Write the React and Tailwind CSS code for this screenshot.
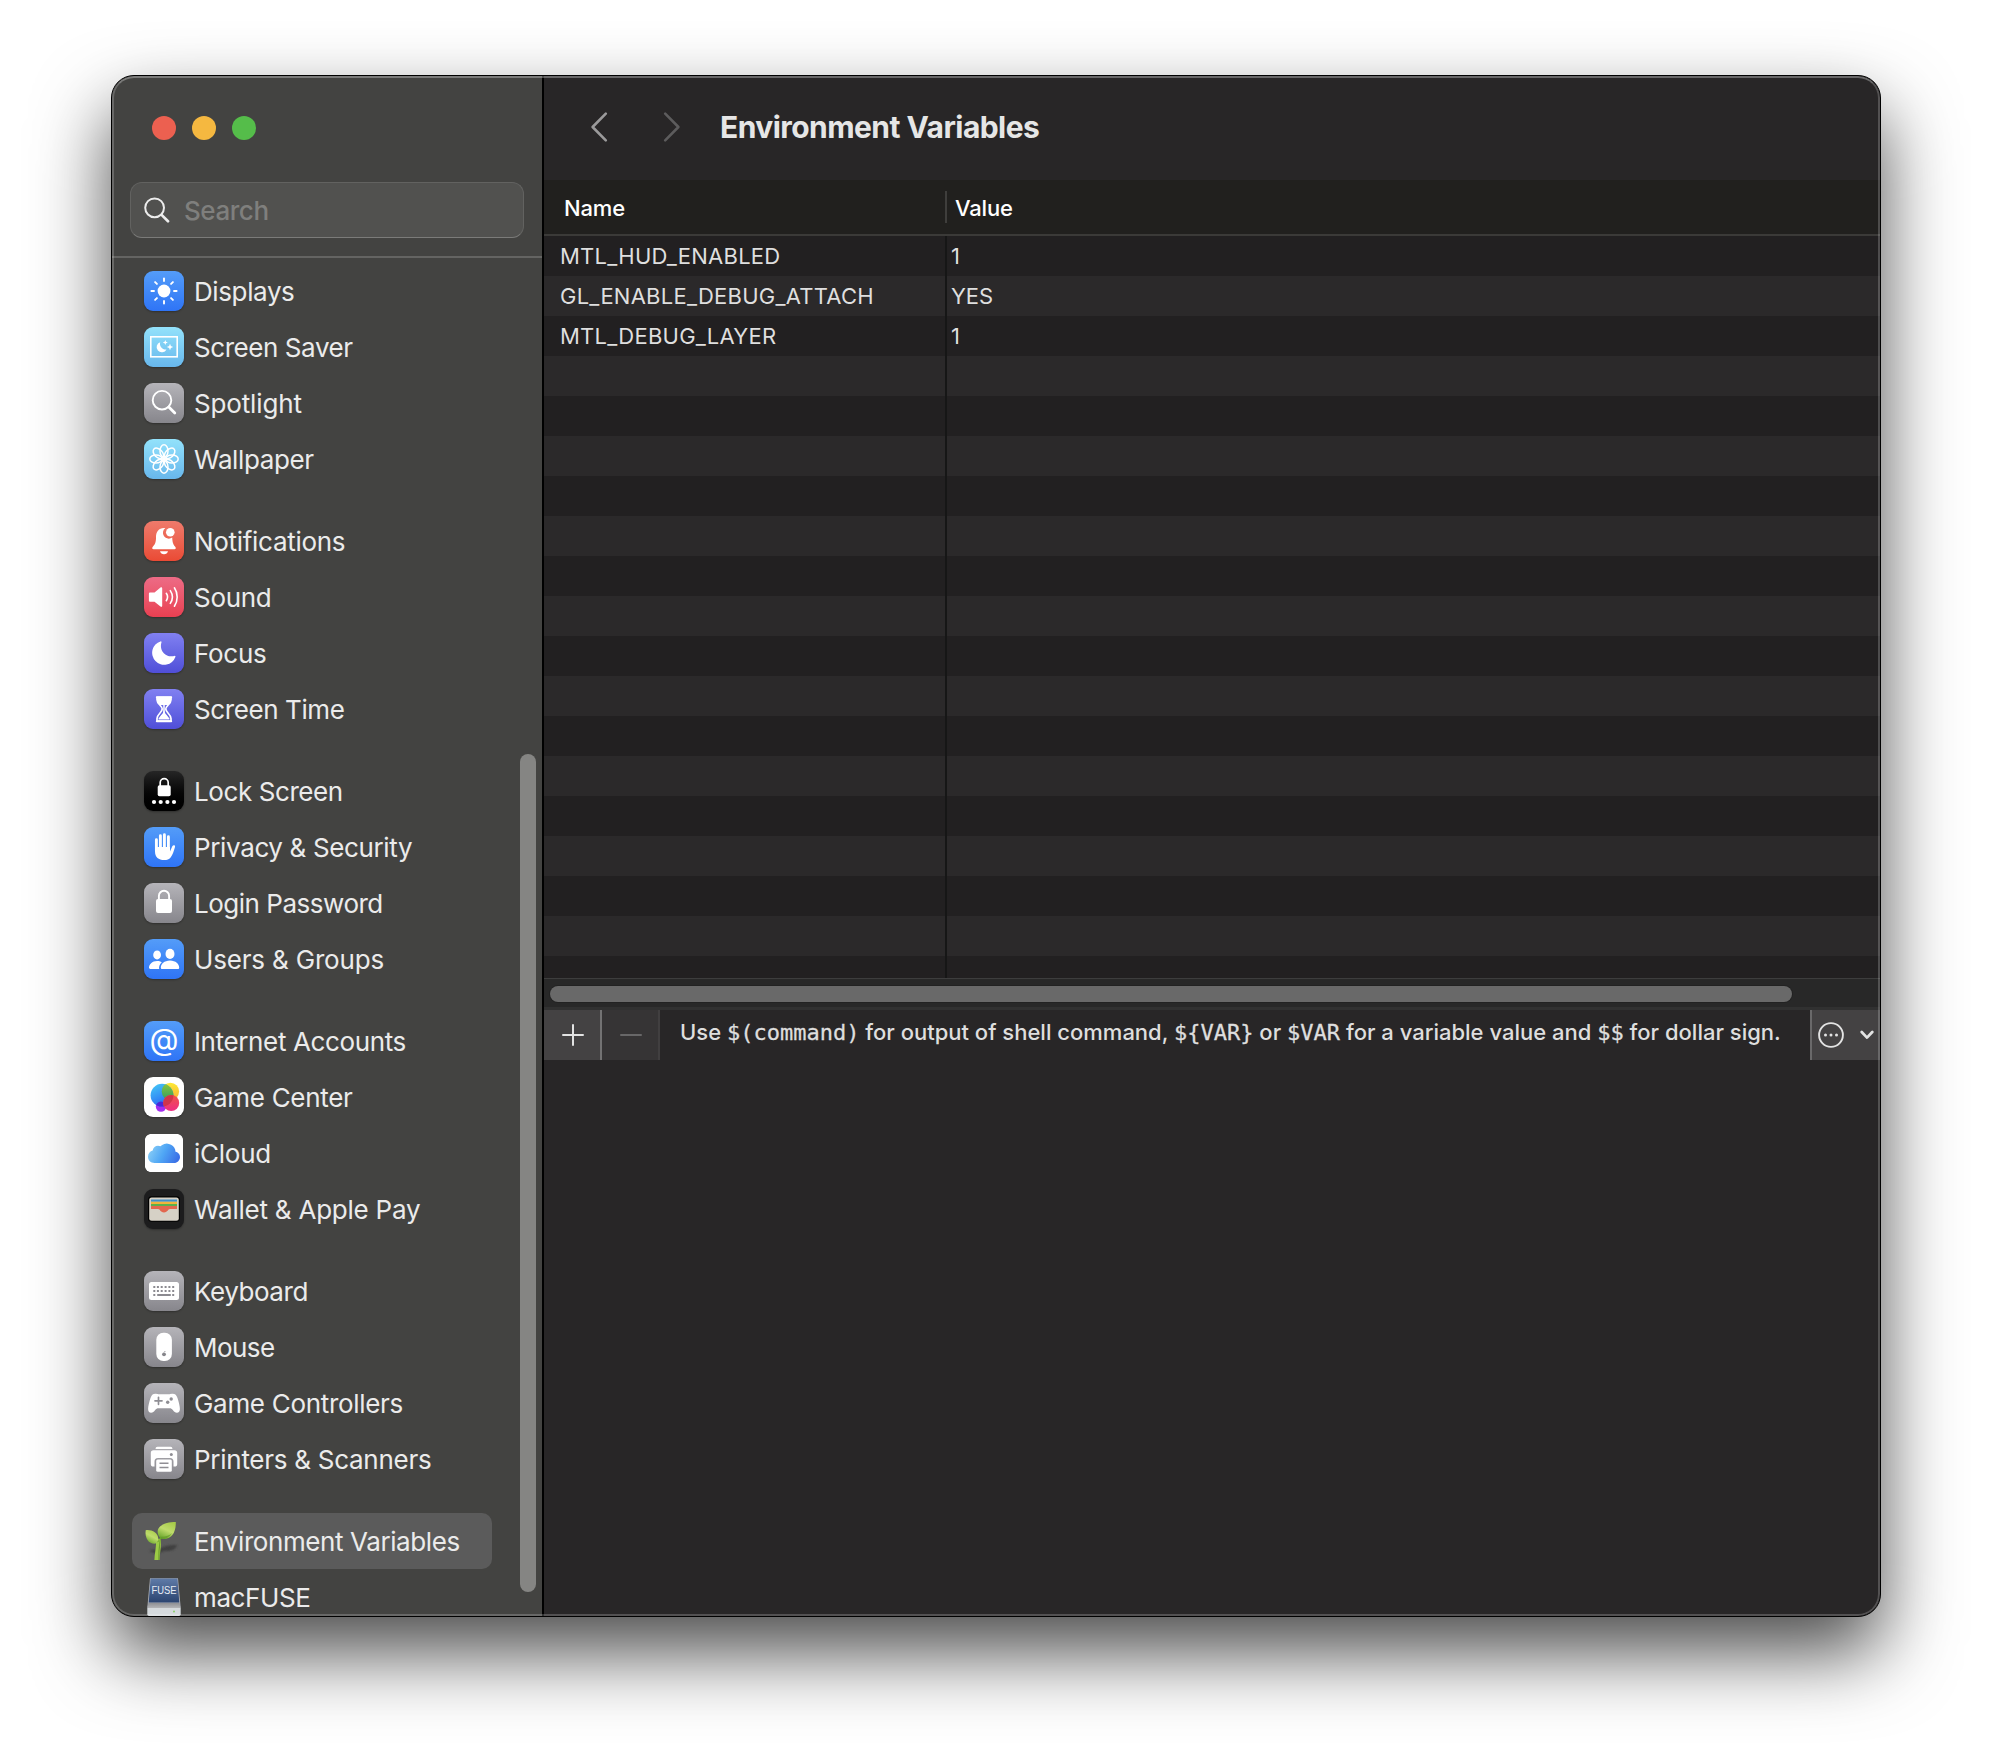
const GRADIENTS = {
  blue: "bg-linear-to-b from-[#549cf8] to-[#2f74f6]",
  sky: "bg-linear-to-b from-[#93e2fb] to-[#68b7ec]",
  gray: "bg-linear-to-b from-[#b5b4b9] to-[#87868c]",
  red: "bg-linear-to-b from-[#ee7a6b] to-[#ea4a34]",
  pink: "bg-linear-to-b from-[#ed6b86] to-[#e93f51]",
  indigo: "bg-linear-to-b from-[#8180f1] to-[#504ed8]",
  black: "bg-linear-to-b from-[#262626] to-[#000000]",
  white: "bg-white",
  dark: "bg-[#1c1c1d]",
  none: "",
};

function Svg({ children }) {
  return (
    <svg viewBox="0 0 40 40" className="block size-10" fill="none">
      {children}
    </svg>
  );
}

const EIGHTHS = [0, 45, 90, 135, 180, 225, 270, 315];

const Displays = () => (
  <Svg>
    <circle cx="20" cy="20" r="6.4" fill="#fff" />
    {EIGHTHS.map((a) => (
      <path key={a} d="M20 10V7.4" stroke="#fff" strokeWidth="1.9" strokeLinecap="round" transform={`rotate(${a} 20 20)`} />
    ))}
  </Svg>
);

const ScreenSaver = () => (
  <Svg>
    <rect x="6.8" y="9.8" width="26.4" height="20" stroke="#fff" strokeWidth="1.6" />
    <path d="M16.2 15.2a5.2 5.2 0 1 0 6.3 7.2 5.6 5.6 0 0 1-6.3-7.2Z" fill="#fff" />
    <path d="M21.3 13l.7 1.8 1.8.7-1.8.7-.7 1.8-.7-1.8-1.8-.7 1.8-.7ZM26 16.8l.9 2.3 2.3.9-2.3.9-.9 2.3-.9-2.3-2.3-.9 2.3-.9Z" fill="#fff" />
  </Svg>
);

const Spotlight = () => (
  <Svg>
    <circle cx="18" cy="17.2" r="9.3" stroke="#fff" strokeWidth="1.9" />
    <path d="M24.8 24l6 6" stroke="#fff" strokeWidth="2.8" strokeLinecap="round" />
  </Svg>
);

const Wallpaper = () => (
  <Svg>
    {EIGHTHS.map((a) => (
      <ellipse key={a} cx="20" cy="12" rx="4" ry="6.2" stroke="#fff" strokeWidth="1.5" transform={`rotate(${a} 20 20)`} />
    ))}
    <circle cx="20" cy="20" r="1.6" fill="#fff" />
  </Svg>
);

const Bell = () => (
  <Svg>
    <path d="M20 7c-5.4 0-8 4-8 9 0 5.5-.9 7.3-3.2 9.7-.9.9-.8 2.6.8 2.6h20.8c1.6 0 1.7-1.7.8-2.6-1.8-1.9-2.8-4-3-9.2A5.7 5.7 0 0 1 21.3 7.1Z" fill="#fff" />
    <circle cx="26.3" cy="11.2" r="4.3" fill="#fff" />
    <path d="M16 30.2h8c-.5 1.9-2 3-4 3s-3.5-1.1-4-3Z" fill="#fff" />
  </Svg>
);

const Sound = () => (
  <Svg>
    <path d="M6.2 15.5h4.3l6-4.9c.8-.6 1.7-.2 1.7.8v17.4c0 1-.9 1.4-1.7.8l-6-4.9H6.2c-.8 0-1.3-.5-1.3-1.3v-6.6c0-.8.5-1.3 1.3-1.3Z" fill="#fff" />
    <path d="M22.3 16.3c1.5 2.2 1.5 5.2 0 7.4M26.3 13.6c2.6 3.9 2.6 8.9 0 12.8M30.4 10.8c3.7 5.5 3.7 12.9 0 18.4" stroke="#fff" strokeWidth="1.6" strokeLinecap="round" />
  </Svg>
);

const Focus = () => (
  <Svg>
    <path d="M16.5 8.4c.6-.3 1.2.2 1 .9-2.7 8.3 4.2 16 12.9 13.6.8-.2 1.3.4 1 1.1A12 12 0 1 1 16.5 8.4Z" fill="#fff" />
  </Svg>
);

const Hourglass = () => (
  <Svg>
    <path d="M13 8.3h14v2.4c0 4.3-5.2 6-5.2 9.4s5.2 5.1 5.2 9.4v2.7H13v-2.7c0-4.3 5.2-6 5.2-9.4s-5.2-5.1-5.2-9.4Z" stroke="#fff" strokeWidth="1.7" strokeLinejoin="round" />
    <path d="M13 8.3h14v2.9c-.5 2.2-1.7 3.4-3 4.7h-8c-1.3-1.3-2.5-2.5-3-4.7ZM20 21c1 4 2.5 4.5 5.500 8.500v1h-11v-1c3-4 4.500-4.500 5.500-8.500Z" fill="#fff" />
    <path d="M20 16v8" stroke="#fff" strokeWidth="1.5" />
    <path d="M12.8 8.2h14.400M12.8 32.200h14.400" stroke="#fff" strokeWidth="2" strokeLinecap="round" />
  </Svg>
);

const LockScreen = () => (
  <Svg>
    <rect x="13.7" y="14.3" width="13" height="11" rx="1.8" fill="#fff" />
    <path d="M16.2 15v-3.4a4 4 0 0 1 8 0V15" stroke="#fff" strokeWidth="1.7" />
    {[10, 16.7, 23.4, 30].map((x) => (
      <circle key={x} cx={x} cy="31" r="2.1" fill="#fff" />
    ))}
  </Svg>
);

const Hand = () => (
  <Svg>
    <path d="M13 13v11M17 9v13M21 8v13M25 10v13" stroke="#fff" strokeWidth="2.9" strokeLinecap="round" transform="translate(-.6 -.3)" />
    <path d="M11 20h15v4.5l2.3-5.2c.8-1.8 3.4-1.4 2.7.8-1.5 4.5-2.2 7.8-4.4 10.4-1.5 1.8-3.6 2.6-6.3 2.6-5.8 0-9.3-3-9.3-8.6Z" fill="#fff" />
  </Svg>
);

const Padlock = () => (
  <Svg>
    <rect x="12" y="16" width="16" height="14" rx="2" fill="#fff" />
    <path d="M14.9 17v-4.1a5.1 5.1 0 0 1 10.2 0V17" stroke="#fff" strokeWidth="1.9" />
  </Svg>
);

const Users = () => (
  <Svg>
    <ellipse cx="13.1" cy="15.9" rx="3.9" ry="4.5" fill="#fff" />
    <path d="M17.8 23.2C16.5 22.4 15 22 13.1 22 8 22 5 25.5 5 28.600c0 .9.5 1.400 1.400 1.400h8.800c-.6-2.200.6-4.900 2.600-6.800Z" fill="#fff" />
    <ellipse cx="26" cy="14.9" rx="4.5" ry="5.1" fill="#fff" />
    <path d="M26 21.6c-5.8 0-9.2 3.800-9.200 6.900 0 1 .5 1.500 1.500 1.500h15.400c1 0 1.500-.5 1.500-1.500 0-3.100-3.400-6.900-9.200-6.900Z" fill="#fff" />
  </Svg>
);

const At = () => (
  <span className="flex size-10 items-center justify-center pb-1 text-[30px] leading-none text-white">@</span>
);

const GameCenter = () => (
  <Svg>
    <defs>
      <linearGradient id="gcBlue" x1="0" y1="0" x2=".5" y2="1">
        <stop offset="0" stopColor="#46cdf6" />
        <stop offset="1" stopColor="#2968f5" />
      </linearGradient>
      <linearGradient id="gcYellow" x1="0" y1="0" x2="0" y2="1">
        <stop offset="0" stopColor="#fdea35" />
        <stop offset="1" stopColor="#f7ad33" />
      </linearGradient>
      <linearGradient id="gcPink" x1="0" y1="0" x2="0" y2="1">
        <stop offset="0" stopColor="#ef5348" />
        <stop offset="1" stopColor="#ee2d83" />
      </linearGradient>
      <linearGradient id="gcGreen" x1="0" y1="0" x2="0" y2="1">
        <stop offset="0" stopColor="#8fc63c" />
        <stop offset="1" stopColor="#2f9e62" />
      </linearGradient>
      <clipPath id="gcClip">
        <circle cx="18" cy="18.2" r="11.4" />
      </clipPath>
    </defs>
    <circle cx="17" cy="29.6" r="5.2" fill="#a32df0" />
    <circle cx="26.4" cy="14.5" r="8.7" fill="url(#gcYellow)" />
    <circle cx="18" cy="18.2" r="11.4" fill="url(#gcBlue)" />
    <g clipPath="url(#gcClip)">
      <circle cx="26.4" cy="14.5" r="8.7" fill="url(#gcGreen)" />
      <circle cx="17" cy="29.6" r="5.2" fill="#4a28d8" />
    </g>
    <circle cx="27.2" cy="26" r="8" fill="url(#gcPink)" />
    <g clipPath="url(#gcClip)">
      <circle cx="27.2" cy="26" r="8" fill="#d0344a" />
    </g>
  </Svg>
);

const ICloud = () => (
  <Svg>
    <defs>
      <linearGradient id="cloud" x1="0" y1=".3" x2="1" y2=".6">
        <stop offset="0" stopColor="#8bcff6" />
        <stop offset=".5" stopColor="#4fa6f5" />
        <stop offset="1" stopColor="#3a6fe6" />
      </linearGradient>
    </defs>
    <rect x="1" y="1" width="38" height="38" rx="5.5" fill="#fff" />
    <path d="M10.5 30C6.7 30 4 27.3 4 23.8c0-3.1 2-5.6 4.7-6.3.4-2.9 2.7-4.8 5.3-4.8.9 0 1.7.2 2.4.6A8.900 8.900 0 0 1 31.300 17v1.400c2.700.5 4.700 2.800 4.700 5.600 0 3.300-2.600 6-6 6Z" fill="url(#cloud)" />
  </Svg>
);

const Wallet = () => (
  <Svg>
    <rect x="4" y="7.3" width="32" height="25.5" rx="3.5" fill="#000" />
    <rect x="5.2" y="8.5" width="29.6" height="23.2" rx="2.5" fill="#d6d1c6" />
    <path d="M7 10.5h26v2.2H7Z" fill="#3f8fc9" />
    <path d="M7 12.7h26v2.2H7Z" fill="#f0b43c" />
    <path d="M7 14.9h26v2.2H7Z" fill="#5bb04c" />
    <path d="M7 17.1h26v3h-7.200c-1.800 0-2 3.400-5.800 3.400s-4-3.400-5.800-3.400H7Z" fill="#e2674f" />
  </Svg>
);

const Keyboard = () => (
  <Svg>
    <rect x="5" y="11" width="30" height="18" rx="2.5" fill="#fff" />
    {[10.3, 13.9, 17.7, 21.6, 25.4, 29.2].map((x) => (
      <path key={x} d={`M${x} 15v2M${x} 19v2`} stroke="#8b8a90" strokeWidth="2" />
    ))}
    <path d="M9.3 24h2M13.2 24h13.6M28.2 24h2" stroke="#8b8a90" strokeWidth="2" />
  </Svg>
);

const Mouse = () => (
  <Svg>
    <rect x="12.3" y="5.7" width="15.6" height="28.3" rx="7" fill="#fff" />
    <circle cx="20" cy="27.3" r="1.9" fill="#86858b" />
    <path d="M20.2 25.2l1-1" stroke="#86858b" strokeWidth="1" />
  </Svg>
);

const Controller = () => (
  <Svg>
    <path d="M11.5 10.8c-2.9 0-4 1.4-5 4.3-1.3 3.9-2.4 8.3-2.4 11 0 2.3 1.1 3.7 3 3.7 1.7 0 2.7-1 4.1-2.7.9-1.2 1.8-1.8 3.4-1.8h10.800c1.600 0 2.500.6 3.400 1.800 1.400 1.700 2.400 2.700 4.100 2.700 1.900 0 3-1.400 3-3.700 0-2.700-1.100-7.100-2.400-11-1-2.900-2.100-4.300-5-4.300-1.200 0-1.800.4-2.800.4H14.300c-1 0-1.600-.4-2.800-.4Z" fill="#fff" />
    <path d="M14.5 14.3v7M11 17.8h7" stroke="#8f8e94" strokeWidth="1.7" strokeLinecap="round" />
    <circle cx="27.2" cy="16" r="1.7" fill="#8f8e94" />
    <circle cx="23.7" cy="19.3" r="1.7" fill="#8f8e94" />
  </Svg>
);

const Printer = () => (
  <Svg>
    <path d="M13.5 7.7h13c1.3 0 1.9.8 1.9 2.2H11.6c0-1.4.6-2.2 1.9-2.2Z" fill="#fff" />
    <path d="M9.5 11.3h21c1.7 0 2.7 1 2.7 2.8v10.8c0 1.8-.9 2.7-2.7 2.7h-1v-5.1c0-2.3-1.1-3.5-3.5-3.5H14c-2.4 0-3.5 1.2-3.5 3.5v5.1h-1c-1.8 0-2.7-.9-2.7-2.7V14.1c0-1.8 1-2.8 2.7-2.8Z" fill="#fff" />
    <circle cx="27.3" cy="15.5" r="1.5" fill="#8f8e94" />
    <rect x="12.2" y="20.4" width="15.6" height="12.4" rx="1.5" fill="#fff" />
    <path d="M15.5 24.3h9M15.5 28.6h9" stroke="#8f8e94" strokeWidth="1.5" />
  </Svg>
);

const Sprout = () => (
  <Svg>
    <defs>
      <linearGradient id="leaf" x1=".8" y1="0" x2=".3" y2="1">
        <stop offset="0" stopColor="#a6ca48" />
        <stop offset=".5" stopColor="#bfdc6c" />
        <stop offset="1" stopColor="#6aa62c" />
      </linearGradient>
      <filter id="soft" x="-30%" y="-60%" width="160%" height="220%">
        <feGaussianBlur stdDeviation="1" />
      </filter>
    </defs>
    <path d="M5 30c4-2 9-1 12-3 3-2 9-3.5 16-3-1 5-7 6.5-13 6-3 2-9 3-15 0Z" fill="#3f3f3f" filter="url(#soft)" />
    <path d="M14.2 18c1.3 6-.9 12-1.3 21" stroke="#9ccb45" strokeWidth="5" />
    <path d="M16.5 17c-1 7-2 12-1.6 22" stroke="#6f9f2e" strokeWidth="1.2" />
    <path d="M14 21c-.5-2.5-1-4-2-5.5" stroke="#79ab35" strokeWidth="2" />
    <path d="M1.7 9.2C7.5 8.4 14 11.5 14.3 18c-.3 2-1.5 3.7-2.5 4.6C5.5 23.5.5 18 1.7 9.200Z" fill="url(#leaf)" />
    <path d="M31.8 1C21 1 13 5 13.700 11.500c.3 3.200 2 5.500 4.300 6.500 9 1 14-5.500 13.800-17Z" fill="url(#leaf)" />
    <path d="M28 12c-2.500 4-6 6-10 6l-2-2.300c5 .3 9-.7 12-3.700Z" fill="#5f9a26" opacity=".7" />
  </Svg>
);

const Fuse = () => (
  <Svg>
    <defs>
      <linearGradient id="fuseBlue" x1="0" y1="0" x2="0" y2="1">
        <stop offset="0" stopColor="#5f7ba8" />
        <stop offset="1" stopColor="#2b4470" />
      </linearGradient>
      <linearGradient id="fuseMetal" x1="0" y1="0" x2="0" y2="1">
        <stop offset="0" stopColor="#8e8f93" />
        <stop offset="1" stopColor="#b4b5b8" />
      </linearGradient>
    </defs>
    <path d="M6 1.2h28l2.7 29.5H3.3Z" fill="#a9adb5" />
    <path d="M6.6 1.5h26.8l1.900 24H4.700Z" fill="url(#fuseBlue)" />
    <path d="M4.5 26h31l1.2 5H3.300Z" fill="url(#fuseMetal)" />
    <path d="M3.3 31h33.4v9H3.300Z" fill="#d5dadd" />
    <circle cx="30" cy="34.5" r="1" fill="#8ad06a" />
    <text x="20" y="16.5" textAnchor="middle" textLength="25" lengthAdjust="spacingAndGlyphs" fontFamily="Liberation Sans" fontSize="10" fill="#e8edf5">
      FUSE
    </text>
  </Svg>
);

const GROUPS = [
  [
    { label: "Displays", tint: "blue", Icon: Displays, tracking: "tracking-[-0.39px]" },
    { label: "Screen Saver", tint: "sky", Icon: ScreenSaver, tracking: "tracking-[-0.43px]" },
    { label: "Spotlight", tint: "gray", Icon: Spotlight, tracking: "tracking-[-0.15px]" },
    { label: "Wallpaper", tint: "sky", Icon: Wallpaper, tracking: "tracking-[-0.39px]" },
  ],
  [
    { label: "Notifications", tint: "red", Icon: Bell, tracking: "tracking-[-0.3px]" },
    { label: "Sound", tint: "pink", Icon: Sound, tracking: "tracking-[-0.3px]" },
    { label: "Focus", tint: "indigo", Icon: Focus, tracking: "tracking-[-0.27px]" },
    { label: "Screen Time", tint: "indigo", Icon: Hourglass, tracking: "tracking-[-0.41px]" },
  ],
  [
    { label: "Lock Screen", tint: "black", Icon: LockScreen, tracking: "tracking-[-0.41px]" },
    { label: "Privacy & Security", tint: "blue", Icon: Hand, tracking: "tracking-[-0.36px]" },
    { label: "Login Password", tint: "gray", Icon: Padlock, tracking: "tracking-[-0.48px]" },
    { label: "Users & Groups", tint: "blue", Icon: Users, tracking: "tracking-[-0.18px]" },
  ],
  [
    { label: "Internet Accounts", tint: "blue", Icon: At, tracking: "tracking-[-0.37px]" },
    { label: "Game Center", tint: "white", Icon: GameCenter, tracking: "tracking-[-0.32px]" },
    { label: "iCloud", tint: "none", Icon: ICloud, tracking: "tracking-[-0.25px]" },
    { label: "Wallet & Apple Pay", tint: "dark", Icon: Wallet, tracking: "tracking-[-0.23px]" },
  ],
  [
    { label: "Keyboard", tint: "gray", Icon: Keyboard, tracking: "tracking-[-0.45px]" },
    { label: "Mouse", tint: "gray", Icon: Mouse, tracking: "tracking-[-0.55px]" },
    { label: "Game Controllers", tint: "gray", Icon: Controller, tracking: "tracking-[-0.31px]" },
    { label: "Printers & Scanners", tint: "gray", Icon: Printer, tracking: "tracking-[-0.27px]" },
  ],
  [
    { label: "Environment Variables", tint: "none", Icon: Sprout, tracking: "tracking-[-0.41px]", selected: true },
    { label: "macFUSE", tint: "none", Icon: Fuse, tracking: "tracking-[-0.38px]" },
  ],
];

const VARIABLES = [
  ["MTL_HUD_ENABLED", "1"],
  ["GL_ENABLE_DEBUG_ATTACH", "YES"],
  ["MTL_DEBUG_LAYER", "1"],
];

const ROWS = Array.from({ length: 19 }, (_, i) => VARIABLES[i] || ["", ""]);

function SidebarItem({ label, tint, Icon, tracking, selected }) {
  return (
    <li className={`flex h-14 w-[360px] items-center rounded-[10px] pl-3 ${selected ? "bg-[#5b5b5b]" : ""}`}>
      <span className={`size-10 shrink-0 overflow-hidden rounded-[9px] ${GRADIENTS[tint]} ${tint === "none" ? "" : "shadow-[0_1px_2px_rgba(0,0,0,0.3)]"}`}>
        <Icon />
      </span>
      <span className={`ml-[10px] whitespace-nowrap pt-[2px] text-[26px] font-[440] leading-8 text-[#ebebeb] ${tracking}`}>{label}</span>
    </li>
  );
}

function Sidebar() {
  return (
    <aside className="flex w-[432px] shrink-0 flex-col border-r-2 border-black bg-[#434341]">
      <div className="flex h-[106px] shrink-0 gap-4 pl-10 pt-10">
        <span className="size-6 rounded-full bg-[#ec6050]" />
        <span className="size-6 rounded-full bg-[#f5b840]" />
        <span className="size-6 rounded-full bg-[#55bd4a]" />
      </div>
      <div className="ml-[18px] flex h-14 w-[394px] shrink-0 items-center rounded-xl border border-[#626260] border-b-[#7b7b79] bg-[#51514f] pl-[13px]">
        <svg viewBox="0 0 26 26" className="size-[26px]" fill="none" stroke="#ececec" strokeLinecap="round">
          <circle cx="10.6" cy="10.8" r="9.4" strokeWidth="2" />
          <path d="M17.6 17.9l6.4 6.3" strokeWidth="2.7" />
        </svg>
        <span className="ml-[14px] pt-[2px] text-[26px] font-[450] leading-8 tracking-[-0.45px] text-[#7f7f7d]">Search</span>
      </div>
      <div className="mt-[18px] flex min-h-0 flex-1 justify-between border-t-2 border-[#646462]">
        <nav className="flex flex-col gap-[26px] pl-5 pt-[5px]">
          {GROUPS.map((group) => (
            <ul key={group[0].label}>
              {group.map((item) => (
                <SidebarItem key={item.label} {...item} />
              ))}
            </ul>
          ))}
        </nav>
        <div className="mr-[6px] mt-[496px] h-[838px] w-4 rounded-full bg-[#858583]" />
      </div>
    </aside>
  );
}

function Table() {
  return (
    <div className="flex h-[798px] shrink-0 flex-col overflow-hidden">
      <div className="flex h-14 shrink-0 items-center border-b-2 border-[#3b3a38] bg-[#21201e] text-[22px] font-medium leading-7 text-white">
        <div className="flex h-8 w-[403px] items-center border-r-2 border-[#3f3e3c] pl-5 pt-[2px] tracking-[-0.15px]">Name</div>
        <div className="pl-2 pt-[2px] tracking-[-0.15px]">Value</div>
      </div>
      <div className="min-h-0 flex-1 overflow-hidden">
        {ROWS.map(([name, value], i) => (
          <div key={i} className="flex h-10 items-center bg-[#222021] text-[22px] font-[440] leading-7 text-[#dfdfdf] even:bg-[#2b292a]">
            <div className="flex h-10 w-[403px] items-center border-r-2 border-[#161616] pl-4 tracking-[0.25px]">{name}</div>
            <div className="pl-1 tracking-[-0.1px]">{value}</div>
          </div>
        ))}
      </div>
    </div>
  );
}

function Code({ children }) {
  return <code className="font-['DejaVu_Sans_Mono',monospace] text-[22px] [-webkit-text-stroke:0.3px]">{children}</code>;
}

export default function App() {
  return (
    <div className="h-[1764px] w-[1992px] overflow-hidden bg-white px-[111px] pt-[75px] font-['Inter','Liberation_Sans',sans-serif]">
      <div className="relative flex h-[1542px] w-[1770px] overflow-hidden rounded-[23px] border border-black bg-[#282627] shadow-[0_36px_76px_rgba(0,0,0,0.7)]">
        <Sidebar />
        <main className="flex min-w-0 flex-1 flex-col">
          <header className="flex h-[104px] shrink-0 items-center pb-[2px]">
            <svg viewBox="0 0 18 32" className="ml-[46px] h-8 w-[18px]" fill="none" stroke="#9b9a9b" strokeWidth="2.6" strokeLinecap="round" strokeLinejoin="round">
              <path d="M15.8 2.7L2.6 16l13.2 13.3" />
            </svg>
            <svg viewBox="0 0 18 32" className="ml-[55px] h-8 w-[18px]" fill="none" stroke="#5d5c5d" strokeWidth="2.6" strokeLinecap="round" strokeLinejoin="round">
              <path d="M2.2 2.7L15.4 16 2.2 29.3" />
            </svg>
            <h1 className="ml-[39px] text-[30px] font-bold leading-10 tracking-[-0.55px] text-[#e6e6e6]">Environment Variables</h1>
          </header>
          <Table />
          <div className="flex h-[29px] shrink-0 flex-col border-t border-[#3d3d3d] bg-[#282828] pl-[6px] pt-[7px]">
            <div className="h-4 w-[1242px] rounded-full bg-[#696969] shadow-[0_0_0_1px_#222]" />
          </div>
          <div className="h-[3px] shrink-0 bg-[#313131]" />
          <div className="flex h-[50px] shrink-0">
            <div className="flex w-[58px] items-center justify-center border-r-2 border-[#737273] bg-[#444243] pl-px">
              <svg viewBox="0 0 22 22" className="size-[22px]" stroke="#e3e3e3" strokeWidth="2" strokeLinecap="round">
                <path d="M11 1v20M1 11h20" />
              </svg>
            </div>
            <div className="flex w-[58px] items-center justify-center border-r-2 border-[#413f40] bg-[#363435] pl-px">
              <svg viewBox="0 0 22 22" className="size-[22px]" stroke="#686768" strokeWidth="2" strokeLinecap="round">
                <path d="M1 11h20" />
              </svg>
            </div>
            <p className="flex-1 whitespace-pre pl-5 pt-[8px] text-[22px] font-[450] leading-7 text-[#dedede]">
              Use <Code>$(command)</Code> for output of shell command, <Code>{"${VAR}"}</Code> or <Code>$VAR</Code> for a variable value and <Code>$$</Code> for dollar sign.
            </p>
            <div className="flex w-[70px] items-center border-l-2 border-[#6a696a] bg-[#444243] pl-[6px]">
              <svg viewBox="0 0 26 26" className="size-[26px]" fill="none">
                <circle cx="13" cy="13" r="11.9" stroke="#e3e3e3" strokeWidth="1.9" />
                <circle cx="7.5" cy="13" r="1.5" fill="#e3e3e3" />
                <circle cx="13" cy="13" r="1.5" fill="#e3e3e3" />
                <circle cx="18.5" cy="13" r="1.5" fill="#e3e3e3" />
              </svg>
              <svg viewBox="0 0 14 10" className="ml-4 h-[10px] w-[14px]" fill="none" stroke="#e3e3e3" strokeWidth="2.7" strokeLinecap="round" strokeLinejoin="round">
                <path d="M1.7 2L7 7.6 12.3 2" />
              </svg>
            </div>
          </div>
        </main>
        <div className="pointer-events-none absolute inset-0 rounded-[22px] border-2 border-white/20 border-t-white/30" />
      </div>
    </div>
  );
}
